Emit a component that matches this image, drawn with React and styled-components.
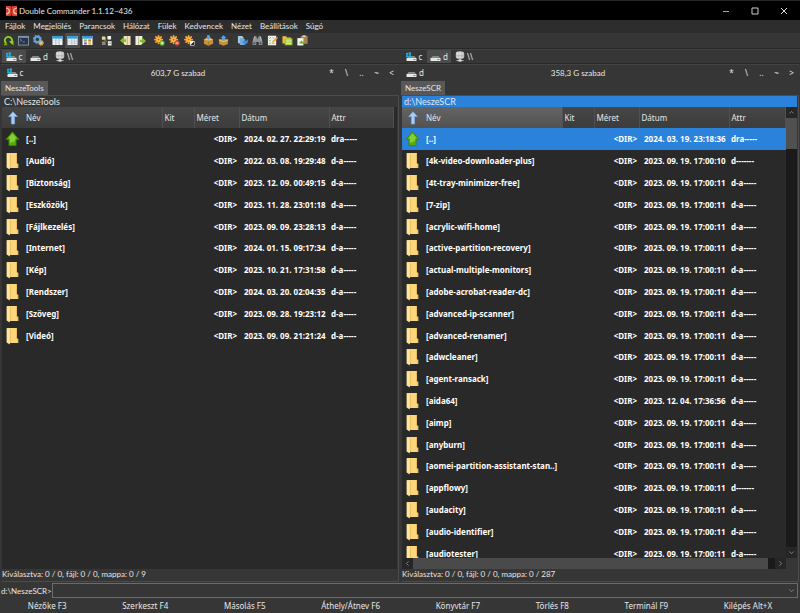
import React from 'react';
import styled, { createGlobalStyle, css } from 'styled-components';

const MENU = ['Fájlok', 'Megjelölés', 'Parancsok', 'Hálózat', 'Fülek', 'Kedvencek', 'Nézet', 'Beállítások', 'Súgó'];

const TOOLS = [
  ['refresh', 'terminal', 'options'],
  ['brief', 'full', 'thumbs'],
  ['swap'],
  ['copyLeft', 'copyRight'],
  ['select', 'unselect', 'invert'],
  ['pack', 'unpack'],
  ['sync', 'find', 'rename', 'folderSync', 'clipboard'],
];

const KEYS = [
  'Nézőke F3',
  'Szerkeszt F4',
  'Másolás F5',
  'Áthely/Átnev F6',
  'Könyvtár F7',
  'Törlés F8',
  'Terminál F9',
  'Kilépés Alt+X',
];

const LEFT_FILES = [
  ['..', '2024. 02. 27. 22:29:19', 'dra-----'],
  ['Audió', '2022. 03. 08. 19:29:48', 'd-a-----'],
  ['Biztonság', '2023. 12. 09. 00:49:15', 'd-a-----'],
  ['Eszközök', '2023. 11. 28. 23:01:18', 'd-a-----'],
  ['Fájlkezelés', '2023. 09. 09. 23:28:13', 'd-a-----'],
  ['Internet', '2024. 01. 15. 09:17:34', 'd-a-----'],
  ['Kép', '2023. 10. 21. 17:31:58', 'd-a-----'],
  ['Rendszer', '2024. 03. 20. 02:04:35', 'd-a-----'],
  ['Szöveg', '2023. 09. 28. 19:23:12', 'd-a-----'],
  ['Videó', '2023. 09. 09. 21:21:24', 'd-a-----'],
];

const RIGHT_FILES = [
  ['..', '2024. 03. 19. 23:18:36', 'dra-----'],
  ['4k-video-downloader-plus', '2023. 09. 19. 17:00:10', 'd-------'],
  ['4t-tray-minimizer-free', '2023. 09. 19. 17:00:11', 'd-a-----'],
  ['7-zip', '2023. 09. 19. 17:00:11', 'd-a-----'],
  ['acrylic-wifi-home', '2023. 09. 19. 17:00:11', 'd-a-----'],
  ['active-partition-recovery', '2023. 09. 19. 17:00:11', 'd-a-----'],
  ['actual-multiple-monitors', '2023. 09. 19. 17:00:11', 'd-a-----'],
  ['adobe-acrobat-reader-dc', '2023. 09. 19. 17:00:11', 'd-a-----'],
  ['advanced-ip-scanner', '2023. 09. 19. 17:00:11', 'd-a-----'],
  ['advanced-renamer', '2023. 09. 19. 17:00:11', 'd-a-----'],
  ['adwcleaner', '2023. 09. 19. 17:00:11', 'd-a-----'],
  ['agent-ransack', '2023. 09. 19. 17:00:11', 'd-a-----'],
  ['aida64', '2023. 12. 04. 17:36:56', 'd-a-----'],
  ['aimp', '2023. 09. 19. 17:00:11', 'd-a-----'],
  ['anyburn', '2023. 09. 19. 17:00:11', 'd-a-----'],
  ['aomei-partition-assistant-stan..', '2023. 09. 19. 17:00:11', 'd-a-----'],
  ['appflowy', '2023. 09. 19. 17:00:11', 'd-------'],
  ['audacity', '2023. 09. 19. 17:00:11', 'd-a-----'],
  ['audio-identifier', '2023. 09. 19. 17:00:11', 'd-a-----'],
  ['audiotester', '2023. 09. 19. 17:00:11', 'd-a-----'],
];

/* Icons */
const Gear = ({ children }) => (
  <>
    <g stroke="#f5a32c" strokeWidth="2" strokeLinecap="round">
      <path d="M5 1v8M1 5h8M2.2 2.2l5.6 5.6M7.8 2.2L2.2 7.8" />
    </g>
    <circle cx="5" cy="5" r="2.4" fill="#ffb84a" />
    <circle cx="5" cy="5" r="0.9" fill="#a86412" />
    {children}
  </>
);

const Columns = ({ children }) => (
  <>
    <rect x="0.5" y="1" width="11" height="10" rx="0.5" fill="#f3f6f8" />
    <rect x="0.5" y="1" width="11" height="3" fill="#3a9bdc" />
    {children}
  </>
);

const TOOL_ART = {
  refresh: (
    <>
      <path d="M3.8 9.4A4 4 0 1 1 8.6 9" fill="none" stroke="#8ed21e" strokeWidth="2" />
      <path d="M6.6 6.6h4.8v4.8z" fill="#8ed21e" />
      <path d="M1 10.4h3.6" stroke="#6cad12" strokeWidth="1.6" />
    </>
  ),
  terminal: (
    <>
      <rect x="0.5" y="1.5" width="11" height="9.5" fill="#27364a" stroke="#8496ad" />
      <path d="M1 2.4h10" stroke="#9eb2ca" />
      <path d="M2.4 4.6l1.6 1.2-1.6 1.2M5 7.5h2.4" fill="none" stroke="#a8b6c6" strokeWidth="0.7" />
    </>
  ),
  options: (
    <>
      <circle cx="4.8" cy="4.8" r="3" fill="none" stroke="#5aa2e0" strokeWidth="2.4" />
      <circle cx="4.8" cy="4.8" r="4.3" fill="none" stroke="#5aa2e0" strokeWidth="1.4" strokeDasharray="1.7 1.67" />
      <circle cx="8.8" cy="8.8" r="2" fill="#a6cdf0" stroke="#d9a452" strokeWidth="1.4" />
      <circle cx="8.8" cy="8.8" r="2.8" fill="none" stroke="#d6a056" strokeWidth="0.8" strokeDasharray="1.1 1.1" />
    </>
  ),
  brief: (
    <Columns>
      <path d="M4.2 4v7M7.8 4v7" stroke="#8aa3b5" strokeWidth="0.8" />
      <path d="M1.5 6h1.6M5.2 6h1.6M8.9 6h1.6M1.5 8.5h1.6M5.2 8.5h1.6" stroke="#c5ced4" strokeWidth="0.8" />
    </Columns>
  ),
  full: (
    <Columns>
      <path d="M1 5.6h10M1 7.4h10M1 9.2h10" stroke="#b9c5cd" strokeWidth="0.7" />
      <path d="M5.2 4v7M8.4 4v7" stroke="#8aa3b5" strokeWidth="0.5" />
    </Columns>
  ),
  thumbs: (
    <Columns>
      <rect x="2.2" y="4.8" width="3" height="2.4" fill="#7bb83f" />
      <rect x="6.8" y="4.8" width="3" height="2.4" fill="#e2742f" />
      <rect x="2.2" y="8" width="3" height="2.4" fill="#8a63b8" />
      <rect x="6.8" y="8" width="3" height="2.4" fill="#e4b02c" />
    </Columns>
  ),
  swap: (
    <>
      <path d="M1 1.5h3l1 1v2.7H1z" fill="#f2d98a" />
      <path d="M1 7h3l1 1v3H1z" fill="#8a8a82" />
      <path d="M7 1h4v4H7zM7.5 6.5h4v5h-4z" fill="#f4f4ef" />
      <path d="M3 5.2l3 1.5-1 1.3M8 7.5h3M8 9.2h3" stroke="#9a9a60" strokeWidth="0.8" fill="none" />
    </>
  ),
  copyLeft: (
    <>
      <path d="M4 1h7.5v10H5.5L4 9.5z" fill="#eee0b4" />
      <path d="M8 1v10" stroke="#b7a36a" strokeWidth="0.8" />
      <path d="M0 6l4-3.6v2.2h2.6v2.8H4v2.2z" fill="#7cc22c" />
    </>
  ),
  copyRight: (
    <>
      <path d="M0.5 1H8v8.5l-1.5 1.5h-6z" fill="#f1eee0" />
      <path d="M4 1v10" stroke="#b7a36a" strokeWidth="0.8" />
      <path d="M12 6.5L8 2.9v2.2H5.4v2.8H8v2.2z" fill="#7cc22c" />
    </>
  ),
  select: (
    <Gear>
      <circle cx="8.8" cy="8.8" r="2.8" fill="#63b52a" />
      <path d="M8.8 7.3v3M7.3 8.8h3" stroke="#fff" strokeWidth="1" />
    </Gear>
  ),
  unselect: (
    <Gear>
      <circle cx="8.8" cy="8.8" r="2.8" fill="#e2462e" />
      <path d="M7.3 8.8h3" stroke="#fff" strokeWidth="1" />
    </Gear>
  ),
  invert: (
    <Gear>
      <rect x="6.5" y="6.5" width="5" height="5" fill="#f6f6f6" />
      <path d="M11 7v4H7z" fill="#222" />
    </Gear>
  ),
  pack: (
    <>
      <path d="M1 4.5l5-1.6 5 1.6v5.1l-5 2.2-5-2.2z" fill="#c98f3b" />
      <path d="M1 4.5l5 1.8 5-1.8-5-1.6z" fill="#f0c678" />
      <path d="M6 6.2v5.4" stroke="#9c6a22" strokeWidth="0.6" />
      <path d="M6 5.2L3 2.8h1.4V0.2h3.2v2.6H9z" fill="#4aa8e6" />
    </>
  ),
  unpack: (
    <>
      <path d="M1.2 5L6 4l4.8 1v4.8L6 11.8 1.2 9.8z" fill="#c98f3b" />
      <path d="M1 4.6L6 6.4l5-1.8v1.6L6 8 1 6.2z" fill="#e8b860" />
      <path d="M6 0.2l3.2 3H7.6v2.4H4.4V3.2H2.8z" fill="#4aa8e6" />
    </>
  ),
  sync: (
    <>
      <path d="M1 1h4.5L7 2.5V9H1z" fill="#a9c8e4" />
      <path d="M3 3.5h4L8.6 5v6H3z" fill="#78a9d4" />
      <path d="M6 7.5l3-3v1.8c2 0 2.6-1 2.8-2 .6 4-1 5.6-2.8 5.6v1.6z" fill="#3f8fdc" />
    </>
  ),
  find: (
    <>
      <path d="M2.4 1.2h2.2l.8 2.6h1.2l.8-2.6h2.2L11.4 7v4H7.4V7.6H4.6V11H.6V7z" fill="#8d9196" />
      <path d="M1.6 8h2v2h-2zM8.4 8h2v2h-2z" fill="#50555a" />
      <path d="M2.8 2.2L2 6M9.2 2.2L10 6" stroke="#c8ccd0" strokeWidth="0.7" />
    </>
  ),
  rename: (
    <>
      <rect x="1" y="0.8" width="9" height="10.4" fill="#f5f5f0" />
      <path d="M2 3l.8.8 1.4-1.6M2 6l.8.8 1.4-1.6M2 9l.8.8 1.4-1.6" fill="none" stroke="#58a528" strokeWidth="0.9" />
      <path d="M5.2 3.2H8M5.2 9.4h3.4" stroke="#9aa" strokeWidth="0.8" />
      <path d="M5.4 8.6l.6-2 4-4.2 1.6 1.4-4.2 4.2z" fill="#f0a030" />
      <path d="M10 2.4l.8-.8 1.4 1.4-.6.8z" fill="#d25a8c" />
    </>
  ),
  folderSync: (
    <>
      <path d="M0.5 1.4h4l1 1.2h4.4v6.8H.5z" fill="#e8c23c" />
      <rect x="3" y="3.8" width="8.4" height="7.4" fill="#9ac42c" />
      <path d="M4.2 5.6h6M4.2 7.5h6M4.2 9.4h6" stroke="#f4f9dc" strokeWidth="0.9" />
    </>
  ),
  clipboard: (
    <>
      <rect x="4" y="1" width="7.6" height="8.6" fill="#a9814a" />
      <rect x="6" y="0.4" width="3.4" height="1.8" fill="#d9d9d9" />
      <rect x="0.4" y="3.4" width="6.6" height="8" fill="#f5f5f0" />
      <path d="M2 8.8l3.4-3.2v1.6h3v2.4h-3" fill="#6db52a" />
    </>
  ),
};

const ToolIcon = ({ name }) => (
  <svg width="11" height="11" viewBox="0 0 12 12" aria-hidden="true">
    {TOOL_ART[name]}
  </svg>
);

const DriveIcon = ({ system }) => (
  <svg width="11" height="10" viewBox="0 0 11 10" aria-hidden="true">
    <path d="M2.4 4h6.2L10.5 7H.5z" fill="#858985" />
    <rect x="0.5" y="6" width="10" height="3" rx="0.5" fill="#e6e8e6" />
    <rect x="7.4" y="7" width="2" height="1" fill="#4da52e" />
    {system && <path d="M0 1l2-.3v2H0zM2.5.6L5 .2v2.5H2.5zM0 3.2h2v2L0 5zM2.5 3.2H5v2.5l-2.5-.4z" fill="#17b4e8" />}
  </svg>
);

const NetworkIcon = () => (
  <svg width="10" height="11" viewBox="0 0 10 11" aria-hidden="true">
    <rect x="0.8" y="0.4" width="8.4" height="7.4" rx="2.4" fill="#c9cbc9" />
    <path d="M2.4.8v6.4M5 .4v7" stroke="#f0f1f0" strokeWidth="0.8" fill="none" />
    <path d="M1 4.8h8" stroke="#999c99" strokeWidth="0.6" />
    <path d="M5 7.5v2M1.5 9.6h7" stroke="#b5b8b5" strokeWidth="1" />
    <rect x="3.6" y="8.4" width="2.8" height="2.2" fill="#e4e4e4" />
  </svg>
);

const FolderIcon = () => (
  <svg width="13" height="18" viewBox="0 0 13 18" aria-hidden="true">
    <path d="M1 1h10v10.5h1.2V16H3z" fill="#fad67c" />
    <path d="M10.5 1.5v10M11.8 12v4" stroke="#e2b652" strokeWidth="0.8" />
    <path d="M3.5 2.5H5V16H3.5z" fill="#eec062" />
    <path d="M0.6 1l3.2 1.6v15L.6 15.6z" fill="#ffe6a0" />
  </svg>
);

const UpIcon = () => (
  <svg width="15" height="16" viewBox="0 0 14 16" aria-hidden="true">
    <path d="M7 .8l6.5 7.6h-2.9v6.2H3.4V8.4H.5z" fill="#58ab0c" stroke="#3c8207" strokeWidth="0.8" />
    <path d="M7 2.2l4.4 5.2H9.6V10L4.4 12V7.4H2.6z" fill="#82d034" />
  </svg>
);

const SortIcon = () => (
  <svg width="10" height="14" viewBox="0 0 10 14" aria-hidden="true">
    <path d="M5 .8l4.4 4.7H6.6V13H3.4V5.500H.6z" fill="#a9cdf4" stroke="#7ba6d8" strokeWidth="0.7" />
  </svg>
);

const Chevron = ({ turn = 0 }) => (
  <svg width="7" height="7" viewBox="0 0 8 8" aria-hidden="true">
    <path d="M1.5 2.8L4 5.3l2.5-2.5" transform={`rotate(${turn} 4 4)`} fill="none" stroke="#8c8c8c" />
  </svg>
);

const AppIcon = () => (
  <svg width="11" height="10" viewBox="0 0 11 10" aria-hidden="true">
    <path d="M0 0h4.5l1 1 1-1H11v10H6.5l-1-1-1 1H0z" fill="#d8402f" />
    <path d="M0 2q3.4.4 3.4 3T0 8M11 2Q7.6 2.400 7.6 5T11 8" fill="none" stroke="#eec6be" strokeWidth="1.2" />
    <path d="M5.5 1v8" stroke="#8a1c12" strokeWidth="0.6" />
  </svg>
);

const Panel = ({ drive, free, tab, path, files, status, active, arrow }) => (
  <PanelBox aria-label={path}>
    <InfoRow>
      <DriveButton $wide>
        <DriveIcon system={drive === 'c'} />
        {drive}
      </DriveButton>
      <FreeSpace>{free}</FreeSpace>
      <Shortcuts>
        {['*', '\\', '..', '~', arrow].map((label) => (
          <Shortcut key={label}>{label}</Shortcut>
        ))}
      </Shortcuts>
    </InfoRow>
    <TabRow>
      <Tab>{tab}</Tab>
    </TabRow>
    <PanelBody>
      <Path $active={active}>{path}</Path>
      <ListArea>
        <ListColumn>
          <ListView $gutter={!active}>
            <FileTable>
              <colgroup>
                <Col $w={160} />
                <Col $w={32} />
                <Col $w={45} />
                <Col $w={90} />
                <col />
              </colgroup>
              <thead>
                <tr>
                  <HeadCell $active={active}>
                    <NameBox>
                      <IconSlot>
                        <SortIcon />
                      </IconSlot>
                      Név
                    </NameBox>
                  </HeadCell>
                  <HeadCell>Kit</HeadCell>
                  <HeadCell>Méret</HeadCell>
                  <HeadCell>Dátum</HeadCell>
                  <HeadCell>Attr</HeadCell>
                </tr>
              </thead>
              <tbody>
                {files.map(([name, date, attr], i) => (
                  <FileRow key={name} $selected={active && i === 0}>
                    <Cell colSpan={2}>
                      <NameBox>
                        <IconSlot>{i === 0 ? <UpIcon /> : <FolderIcon />}</IconSlot>[{name}]
                      </NameBox>
                    </Cell>
                    <Cell $right>&lt;DIR&gt;</Cell>
                    <Cell $date>{date}</Cell>
                    <Cell>{attr}</Cell>
                  </FileRow>
                ))}
              </tbody>
            </FileTable>
          </ListView>
          {active && (
            <HScroll>
              <ScrollButton aria-label="Balra">
                <Chevron turn={90} />
              </ScrollButton>
              <HThumb />
              <ScrollButton aria-label="Jobbra">
                <Chevron turn={-90} />
              </ScrollButton>
            </HScroll>
          )}
        </ListColumn>
        {active && (
          <VScroll>
            <ScrollButton aria-label="Fel">
              <Chevron turn={180} />
            </ScrollButton>
            <VThumb />
            <ScrollButton aria-label="Le">
              <Chevron />
            </ScrollButton>
          </VScroll>
        )}
      </ListArea>
      <Status>{status}</Status>
    </PanelBody>
  </PanelBox>
);

const Drives = ({ current }) => (
  <DriveBar>
    <DriveButton $on={current === 'c'}>
      <DriveIcon system />c
    </DriveButton>
    <DriveButton $on={current === 'd'}>
      <DriveIcon />d
    </DriveButton>
    <DriveButton>
      <NetworkIcon />
      {'\\\\'}
    </DriveButton>
  </DriveBar>
);

const App = () => {
  return (
    <Window>
      <GlobalStyle />
      <TitleBar>
        <AppIcon />
        <Title>Double Commander 1.1.12~436</Title>
        <WindowButton aria-label="Kis méret">
          <svg width="8" height="8" viewBox="0 0 8 8">
            <path d="M1 4.5h6" stroke="#aaa" />
          </svg>
        </WindowButton>
        <WindowButton aria-label="Teljes méret">
          <svg width="8" height="8" viewBox="0 0 8 8">
            <path d="M1 1h6v6H1z" fill="none" stroke="#ccc" />
          </svg>
        </WindowButton>
        <WindowButton aria-label="Bezárás">
          <svg width="8" height="8" viewBox="0 0 8 8">
            <path d="M1 1l6 6M7 1L1 7" stroke="#ddd" />
          </svg>
        </WindowButton>
      </TitleBar>

      <MenuBar>
        {MENU.map((item) => (
          <MenuItem key={item}>{item}</MenuItem>
        ))}
      </MenuBar>

      <Toolbar>
        {TOOLS.map((group) => (
          <ToolGroup key={group[0]}>
            {group.map((name) => (
              <ToolButton key={name} $on={name === 'full'} aria-label={name}>
                <ToolIcon name={name} />
              </ToolButton>
            ))}
          </ToolGroup>
        ))}
      </Toolbar>

      <DriveBars>
        <Drives current="c" />
        <Drives current="d" />
      </DriveBars>

      <Panels>
        <Panel
          drive="c"
          free="603,7 G szabad"
          tab="NeszeTools"
          path="C:\NeszeTools"
          files={LEFT_FILES}
          status="Kiválasztva: 0 / 0, fájl: 0 / 0, mappa: 0 / 9"
          arrow="<"
        />
        <Panel
          drive="d"
          free="358,3 G szabad"
          tab="NeszeSCR"
          path="d:\NeszeSCR"
          files={RIGHT_FILES}
          status="Kiválasztva: 0 / 0, fájl: 0 / 0, mappa: 0 / 287"
          active
          arrow=">"
        />
      </Panels>

      <CommandRow>
        <label htmlFor="command">d:\NeszeSCR&gt;</label>
        <CommandBox>
          <CommandInput id="command" type="text" />
          <ScrollButton $clear aria-label="Előzmények">
            <Chevron />
          </ScrollButton>
        </CommandBox>
      </CommandRow>

      <KeyBar>
        {KEYS.map((key) => (
          <KeyButton key={key}>{key}</KeyButton>
        ))}
      </KeyBar>
    </Window>
  );
};

export default App;

// Styled Components
const GlobalStyle = createGlobalStyle`
  body {
    margin: 0;
    background: #363636;
  }

  * {
    box-sizing: border-box;
  }

  svg {
    display: block;
    flex: none;
  }
`;

const button = css`
  display: flex;
  align-items: center;
  justify-content: center;
  margin: 0;
  padding: 0;
  border: 0;
  background: none;
  color: inherit;
  font: inherit;
  white-space: nowrap;
`;

const wideFont = css`
  font-family: 'Noto Sans', sans-serif;
`;

const Window = styled.div`
  display: flex;
  flex-direction: column;
  height: 100vh;
  overflow: hidden;
  background: #363636;
  color: #e6e6e6;
  font-family: Lato, 'Noto Sans', sans-serif;
  font-size: 8px;
  line-height: 12px;
`;

const TitleBar = styled.header`
  display: flex;
  align-items: center;
  height: 20px;
  padding: 0 2px 0 6px;
  border-top: 1px solid #262626;
  background: #000;
`;

const Title = styled.h1`
  flex: 1;
  margin: 0;
  padding-left: 2px;
  font-size: 8px;
  font-weight: 400;
`;

const WindowButton = styled.button`
  ${button}
  width: 29px;
  height: 19px;
`;

const MenuBar = styled.nav`
  display: flex;
  gap: 8px;
  height: 13px;
  padding-left: 5px;
  background: #2d2d2d;
`;

const MenuItem = styled.button`
  ${button}
  height: 12px;
`;

const Toolbar = styled.div`
  display: flex;
  gap: 4px;
  height: 16px;
  padding-left: 1px;
  border-bottom: 1px solid #282828;
`;

const ToolGroup = styled.div`
  display: flex;
`;

const ToolButton = styled.button`
  ${button}
  width: 15px;
  height: 15px;
  background: ${({ $on }) => ($on ? '#4c4c4c' : 'none')};
`;

const DriveBars = styled.div`
  display: flex;
  height: 15px;
  border-top: 1px solid #424242;
  border-bottom: 1px solid #292929;
`;

const DriveBar = styled.div`
  display: flex;
  flex: 1;
  align-items: center;
  gap: 1px;
  padding-left: 2px;
`;

const DriveButton = styled.button`
  ${button}
  gap: 2px;
  width: 24px;
  height: 13px;
  border-radius: 1px;
  background: ${({ $on }) => ($on ? '#4c4c4c' : 'none')};
  ${wideFont}
  ${({ $wide }) => $wide && 'width: 28px;'}
`;

const Panels = styled.main`
  display: flex;
  flex: 1;
  min-height: 0;
`;

const PanelBox = styled.section`
  display: flex;
  flex: 1;
  flex-direction: column;
  min-width: 0;
  padding: 0 1px;
`;

const InfoRow = styled.div`
  display: flex;
  align-items: center;
  height: 17px;
  border-top: 1px solid #424242;
`;

const FreeSpace = styled.span`
  flex: 1;
  padding-left: 3px;
  text-align: center;
`;

const Shortcuts = styled.div`
  display: flex;
  ${wideFont}
`;

const Shortcut = styled.button`
  ${button}
  width: 15px;
  height: 15px;
`;

const TabRow = styled.div`
  display: flex;
  height: 14px;
`;

const Tab = styled.button`
  ${button}
  padding: 0 4px;
  background: #585858;
`;

const PanelBody = styled.div`
  display: flex;
  flex: 1;
  flex-direction: column;
  min-height: 0;
  padding-right: 1px;
  border: 1px solid #4c4c4c;
  border-left-color: #363636;
`;

const Path = styled.div`
  height: 11px;
  padding-left: 2px;
  background: ${({ $active }) => ($active ? '#2a82da' : '#363636')};
  font-size: 9px;
  line-height: 11px;
`;

const ListArea = styled.div`
  display: flex;
  flex: 1;
  min-height: 0;
`;

const ListColumn = styled.div`
  display: flex;
  flex: 1;
  flex-direction: column;
  min-width: 0;
`;

const ListView = styled.div`
  flex: 1;
  min-height: 0;
  padding-right: ${({ $gutter }) => ($gutter ? '3px' : '0')};
  overflow: hidden;
  background: #292929;
`;

const FileTable = styled.table`
  width: 100%;
  table-layout: fixed;
  border-collapse: collapse;
  ${wideFont}
`;

const Col = styled.col`
  width: ${({ $w }) => $w}px;
`;

const HeadCell = styled.th`
  height: 21px;
  padding: 0 0 0 2px;
  border-right: 1px solid #505050;
  background: ${({ $active }) =>
    $active ? 'linear-gradient(#646464, #525252)' : 'linear-gradient(#464646, #3c3c3c)'};
  font-weight: 400;
  text-align: left;

  &:first-child {
    padding-left: 0;
  }
`;

const FileRow = styled.tr`
  height: 22px;
  background: ${({ $selected }) => ($selected ? '#2a82da' : 'none')};
  color: #fff;

  &:nth-child(5n) {
    height: 21px;
  }
`;

const Cell = styled.td`
  padding: 0 0 0 2px;
  font-weight: 700;
  text-align: ${({ $right }) => ($right ? 'right' : 'left')};
  white-space: nowrap;
  ${({ $right }) => $right && 'padding-right: 2px;'}
  ${({ $date }) => $date && 'padding-left: 5px;'}

  &:first-child {
    padding-left: 0;
  }
`;

const NameBox = styled.div`
  display: flex;
  align-items: center;
  height: 21px;
`;

const IconSlot = styled.span`
  display: flex;
  justify-content: center;
  width: 21px;
  margin-right: 3px;
`;

const HScroll = styled.div`
  display: flex;
  height: 11px;
  background: #1a1a1a;
`;

const HThumb = styled.div`
  flex: 1;
  margin-right: 7px;
  background: #4a4a4a;
`;

const VScroll = styled.div`
  display: flex;
  flex-direction: column;
  width: 11px;
  margin-bottom: 11px;
  background: #1a1a1a;
`;

const VThumb = styled.div`
  height: 31px;
  margin-bottom: auto;
  background: #505050;
`;

const ScrollButton = styled.button`
  ${button}
  flex: none;
  width: 11px;
  height: 11px;
  background: ${({ $clear }) => ($clear ? 'none' : '#262626')};
`;

const Status = styled.footer`
  height: 12px;
  line-height: 11px;
`;

const CommandRow = styled.div`
  display: flex;
  align-items: center;
  padding: 1px 2px 0 1px;
`;

const CommandBox = styled.div`
  display: flex;
  flex: 1;
  align-items: center;
  height: 15px;
  border: 1px solid #6c6c6c;
`;

const CommandInput = styled.input`
  flex: 1;
  min-width: 0;
  height: 13px;
  padding: 0 2px;
  border: 0;
  background: none;
  color: inherit;
  font: inherit;
  outline: none;
`;

const KeyBar = styled.footer`
  display: flex;
  height: 15px;
  ${wideFont}
`;

const KeyButton = styled.button`
  ${button}
  flex: 1 1 auto;
`;
